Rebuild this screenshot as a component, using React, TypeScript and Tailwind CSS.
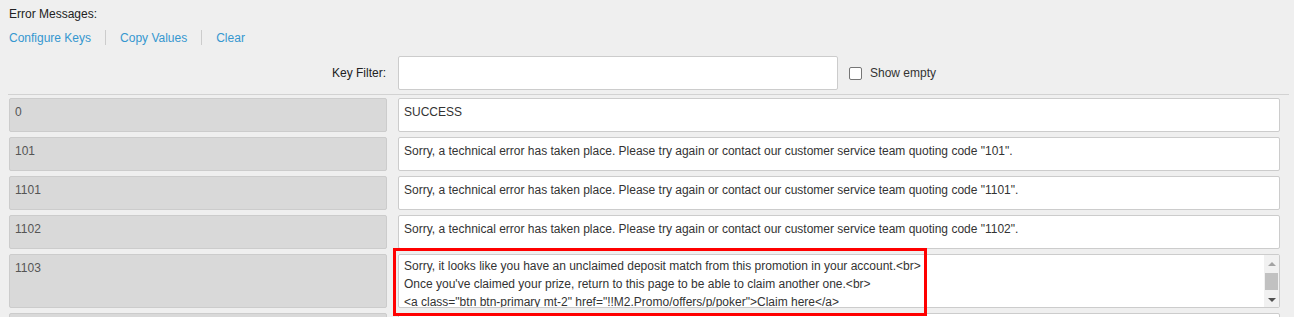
import React from 'react';

type Row = { key: string; value: string; tall?: boolean };

const rows: Row[] = [
  { key: '0', value: 'SUCCESS' },
  { key: '101', value: 'Sorry, a technical error has taken place. Please try again or contact our customer service team quoting code "101".' },
  { key: '1101', value: 'Sorry, a technical error has taken place. Please try again or contact our customer service team quoting code "1101".' },
  { key: '1102', value: 'Sorry, a technical error has taken place. Please try again or contact our customer service team quoting code "1102".' },
  {
    key: '1103',
    tall: true,
    value:
      'Sorry, it looks like you have an unclaimed deposit match from this promotion in your account.<br>\nOnce you\'ve claimed your prize, return to this page to be able to claim another one.<br>\n<a class="btn btn-primary mt-2" href="!!M2.Promo/offers/p/poker">Claim here</a>',
  },
  // next row is only peeking in at the bottom edge
  { key: '', value: '' },
];

const Scrollbar: React.FC = () => (
  <div className="w-[15px] shrink-0 bg-[#f1f1f1] flex flex-col items-center">
    <div className="h-[17px] w-full flex items-center justify-center">
      <div className="w-0 h-0 border-l-[4px] border-r-[4px] border-b-[4px] border-l-transparent border-r-transparent border-b-[#a3a3a3]" />
    </div>
    <div className="w-[13px] h-[17px] bg-[#c1c1c1] mt-[1px]" />
    <div className="flex-1" />
    <div className="h-[15px] w-full flex items-center justify-center">
      <div className="w-0 h-0 border-l-[4px] border-r-[4px] border-t-[4px] border-l-transparent border-r-transparent border-t-[#505050]" />
    </div>
  </div>
);

const KeyRow: React.FC<{ row: Row }> = ({ row }) => {
  const h = row.tall ? 'h-[54px]' : 'h-[34px]';
  return (
    <div className="flex gap-[11px]">
      <div className={`w-[378px] shrink-0 ${h} bg-[#d9d9d9] border border-[#cccccc] rounded-[2px] px-[5px] pt-[4px] text-[#555555] leading-[18px]`}>
        {row.key}
      </div>
      {row.tall ? (
        <div className={`w-[882px] shrink-0 ${h} bg-white border border-[#cccccc] rounded-[2px] flex overflow-hidden`}>
          <div className="flex-1 pl-[5px] pt-[2px] text-[#333333] leading-[18px] whitespace-pre overflow-hidden">
            {row.value}
          </div>
          <Scrollbar />
        </div>
      ) : (
        <div className={`w-[882px] shrink-0 ${h} bg-white border border-[#cccccc] rounded-[2px] px-[5px] pt-[4px] text-[#333333] leading-[18px] whitespace-nowrap overflow-hidden`}>
          {row.value}
        </div>
      )}
    </div>
  );
};

export default function App() {
  return (
    <div className="relative h-[317px] overflow-hidden bg-[#efefef] text-[12px] font-['Liberation_Sans',Arial,sans-serif]">
      <div className="pl-[9px] pt-[7px] leading-[14px] text-[#222222]">Error Messages:</div>

      <div className="pl-[9px] mt-[9px] flex items-center leading-[14px] text-[#3597cf]">
        <span className="pr-[14px]">Configure Keys</span>
        <span className="border-l border-[#cccccc] h-[15px] px-[14px] flex items-center">Copy Values</span>
        <span className="border-l border-[#cccccc] h-[15px] px-[14px] flex items-center">Clear</span>
      </div>

      <div className="pl-[9px] mt-[11px] flex items-center gap-[11px]">
        <div className="w-[378px] shrink-0 text-right text-[#222222] pr-[1px]">Key Filter:</div>
        <div className="w-[440px] h-[34px] bg-white border border-[#cccccc] rounded-[2px]" />
        <div className="flex items-center gap-[8px] text-[#333333]">
          <div className="w-[13px] h-[13px] bg-white border border-[#767676] rounded-[2px]" />
          <span>Show empty</span>
        </div>
      </div>

      <div className="mt-[4px] ml-[8px] mr-[5px] border-t border-[#d2d2d2]" />

      <div className="pl-[9px] pt-[3px] flex flex-col gap-[5px]">
        {rows.map((r, i) => (
          <KeyRow key={i} row={r} />
        ))}
      </div>

      <div className="absolute left-[393px] top-[248px] w-[534px] h-[68px] border-[3px] border-[#ff0000] pointer-events-none" />
    </div>
  );
}
